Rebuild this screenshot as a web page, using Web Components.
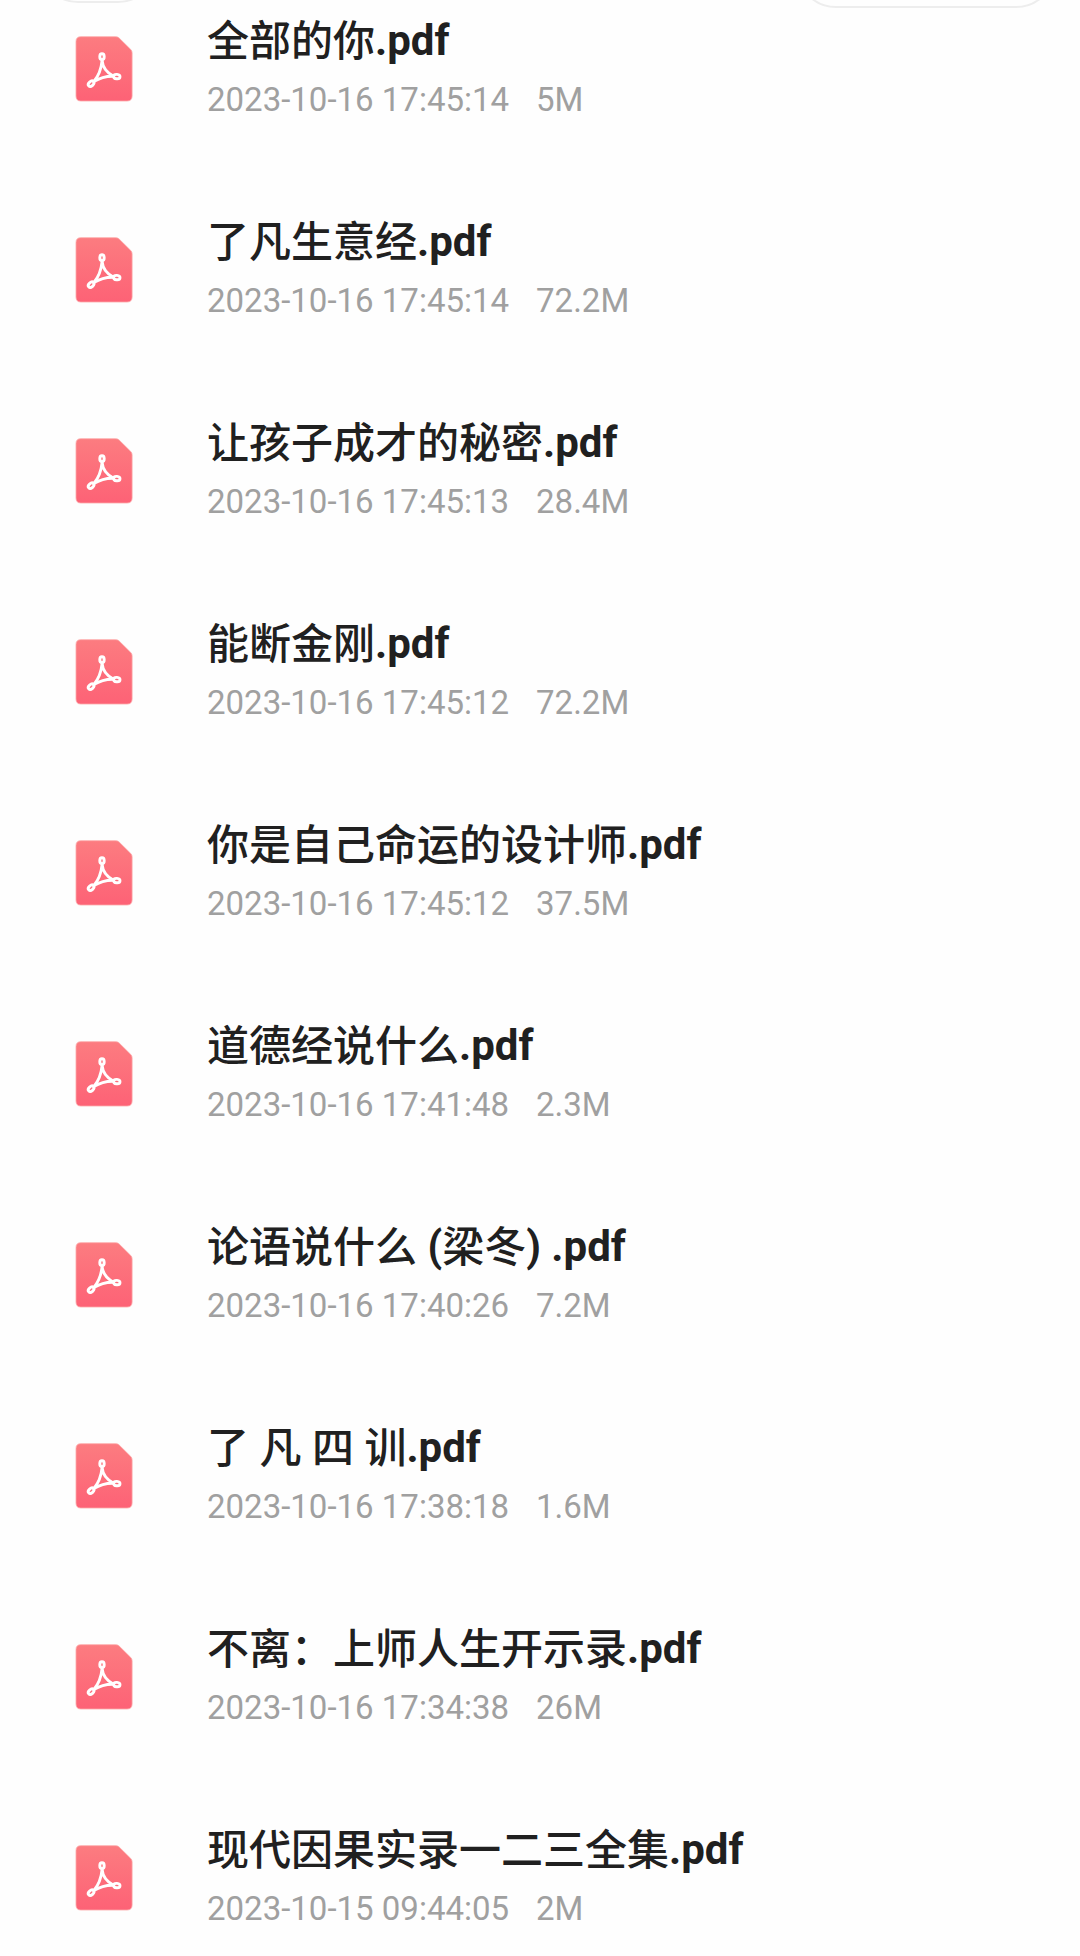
<!DOCTYPE html>
<html lang="zh-CN">
<head>
<meta charset="utf-8">
<title>文件</title>
<style>
  body {
    margin: 0;
    height: 1956px;
    overflow: hidden;
    background: #fefefe;
    font-family: Roboto, "Noto Sans CJK SC", sans-serif;
  }
</style>
</head>
<body>
<file-list>
  <filter-bar slot="header"></filter-bar>
  <file-item time="2023-10-16 17:45:14" size="5M">全部的你.pdf</file-item>
  <file-item time="2023-10-16 17:45:14" size="72.2M">了凡生意经.pdf</file-item>
  <file-item time="2023-10-16 17:45:13" size="28.4M">让孩子成才的秘密.pdf</file-item>
  <file-item time="2023-10-16 17:45:12" size="72.2M">能断金刚.pdf</file-item>
  <file-item time="2023-10-16 17:45:12" size="37.5M">你是自己命运的设计师.pdf</file-item>
  <file-item time="2023-10-16 17:41:48" size="2.3M">道德经说什么.pdf</file-item>
  <file-item time="2023-10-16 17:40:26" size="7.2M">论语说什么 (梁冬) .pdf</file-item>
  <file-item time="2023-10-16 17:38:18" size="1.6M">了 凡 四 训.pdf</file-item>
  <file-item time="2023-10-16 17:34:38" size="26M">不离：上师人生开示录.pdf</file-item>
  <file-item time="2023-10-15 09:44:05" size="2M">现代因果实录一二三全集.pdf</file-item>
</file-list>

<script>
/** <filter-bar>: two outlined pills, mostly scrolled off the top edge. */
class FilterBar extends HTMLElement {
  constructor() {
    super();
    this.attachShadow({ mode: 'open' }).innerHTML = `
      <style>
        :host {
          display: flex;
          justify-content: space-between;
          align-items: flex-end;
          box-sizing: border-box;
          height: 8px;
          padding: 0 24px 0 38px;
        }
        span {
          box-sizing: border-box;
          flex: none;
          height: 80px;
          border: 2px solid #ededed;
          border-radius: 40px;
        }
        .left { width: 120px; margin-bottom: 5px; }
        .right { width: 260px; }
      </style>
      <span class="left"></span>
      <span class="right"></span>
    `;
  }
}

/** <pdf-icon>: red sheet with a cut corner and the three-loop mark. */
class PdfIcon extends HTMLElement {
  constructor() {
    super();
    this.attachShadow({ mode: 'open' }).innerHTML = `
      <style>
        :host { display: block; width: 58px; height: 66px; }
        svg { display: block; }
      </style>
      <svg width="58" height="66" viewBox="0 0 58 66" fill="none">
        <defs>
          <linearGradient id="sheet" x1="0" y1="0" x2="0" y2="1">
            <stop offset="0" stop-color="#fc7c80"/>
            <stop offset="1" stop-color="#fd6276"/>
          </linearGradient>
        </defs>
        <path transform="translate(.3)" d="M5.5 .7H40.5Q42.5 .7 43.9 2.1L55.4 13.4Q56.8 14.8 56.8 16.8V60Q56.8 65 51.8 65H5.5Q.7 65 .7 60V5.5Q.7 .7 5.5 .7Z" fill="url(#sheet)" stroke="#fcaaa9" stroke-width=".8"/>
        <g transform="translate(.3)" stroke="#fff" stroke-width="2.9" stroke-linejoin="round">
          <ellipse cx="26.7" cy="20.7" rx="2.2" ry="2.9"/>
          <ellipse cx="15.8" cy="47.7" rx="3.2" ry="2.2" transform="rotate(-42 15.8 47.7)"/>
          <ellipse cx="41.5" cy="40.6" rx="3.2" ry="2.2" transform="rotate(5 41.5 40.6)"/>
          <path d="M26.8 24.3C27.3 31 31.5 36.5 38.2 40.2C31 40 24.5 41.8 18.4 45.6C23.2 40 26.1 32 26.8 24.3Z"/>
        </g>
      </svg>
    `;
  }
}

/** <file-item time size>: one row, file name in the default slot. */
class FileItem extends HTMLElement {
  constructor() {
    super();
    this.attachShadow({ mode: 'open' }).innerHTML = `
      <style>
        :host {
          display: flex;
          box-sizing: border-box;
          height: 201px;
          padding-left: 75px;
        }
        pdf-icon { flex: none; margin: 28px 74px 0 0; }
        .text { padding-top: 3px; }
        .name {
          color: #202020;
          font-weight: 700;
          font-size: 42px;
          line-height: 60px;
          white-space: pre;
        }
        .name span { line-height: 1; }
        .name .cjk {
          font-family: "Noto Sans CJK SC", sans-serif;
          font-weight: 500;
          vertical-align: -1px;
        }
        .meta {
          display: flex;
          gap: 27px;
          color: #a0a0a0;
          font-size: 33px;
          line-height: 40px;
          margin-top: 9px;
          white-space: nowrap;
        }
      </style>
      <pdf-icon></pdf-icon>
      <div class="text">
        <div class="name"></div>
        <div class="meta"><span class="time"></span><span class="size"></span></div>
      </div>
    `;
  }

  connectedCallback() {
    this.shadowRoot.querySelector('.time').textContent = this.getAttribute('time');
    this.shadowRoot.querySelector('.size').textContent = this.getAttribute('size');
    this._renderName();
  }

  // Chinese glyphs are set lighter than the Latin ones, so split the name.
  _renderName() {
    const name = this.shadowRoot.querySelector('.name');
    name.innerHTML = '';
    const runs = this.textContent.match(/[\u3000-\u9fff\uff00-\uffef]+|[^\u3000-\u9fff\uff00-\uffef]+/g) || [];
    runs.forEach((run) => {
      const span = document.createElement('span');
      if (run.charCodeAt(0) >= 0x3000) span.className = 'cjk';
      span.textContent = run;
      name.appendChild(span);
    });
  }
}

/** <file-list>: header slot on top, rows below. */
class FileList extends HTMLElement {
  constructor() {
    super();
    this.attachShadow({ mode: 'open' }).innerHTML = `
      <style>
        :host {
          display: flex;
          flex-direction: column;
          height: 1956px;
          overflow: hidden;
        }
        ::slotted(*) { flex: none; }
      </style>
      <slot name="header"></slot>
      <slot></slot>
    `;
  }
}

customElements.define('filter-bar', FilterBar);
customElements.define('pdf-icon', PdfIcon);
customElements.define('file-item', FileItem);
customElements.define('file-list', FileList);
</script>
</body>
</html>
